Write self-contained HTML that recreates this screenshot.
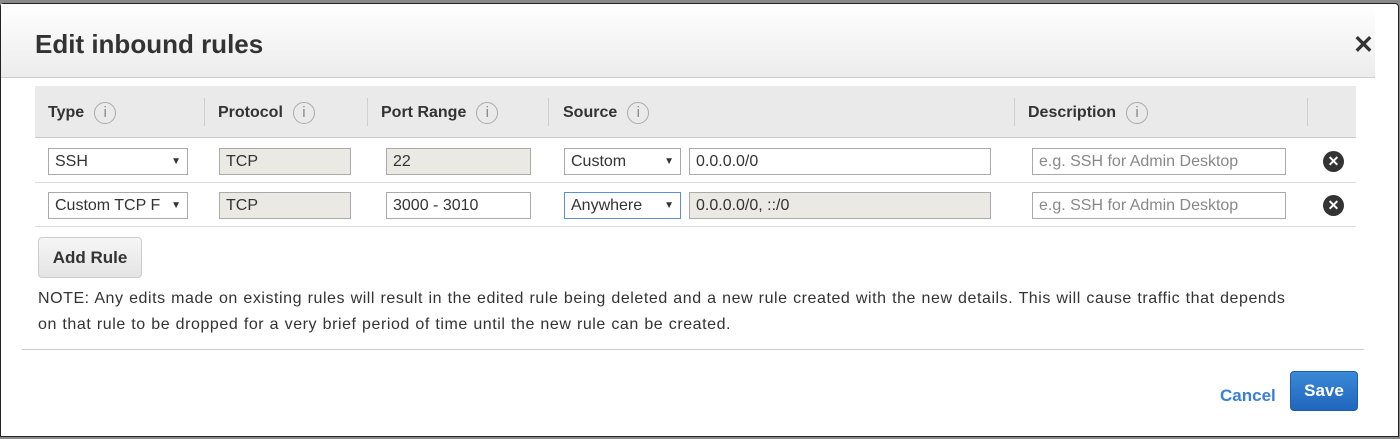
<!DOCTYPE html>
<html><head><style>
*{box-sizing:border-box;margin:0;padding:0}
body{width:1400px;height:439px;background:#8a8a8a;position:relative;overflow:hidden;font-family:"Liberation Sans",Arial,sans-serif;color:#333}
.a{position:absolute}
.dlg{left:0;top:3px;width:1399px;height:434px;background:#fff;border:1px solid #222;border-radius:4px 4px 0 0}
.hdr{left:1px;top:4px;width:1374px;height:74px;background:linear-gradient(#fff,#ececec);border-bottom:1px solid #ccc}
.th{top:86px;left:35px;width:1321px;height:52px;background:#eaeaea;border-bottom:1px solid #ccc}
.sep{top:98px;width:1px;height:28px;background:#d0d0d0}
.hl{font-weight:bold;font-size:16px;top:102px}
.i{display:inline-block;width:22px;height:22px;border:1px solid #aaa;border-radius:50%;font-size:15px;font-weight:normal;color:#888;text-align:center;line-height:20px;margin-left:10px;vertical-align:middle;font-family:"Liberation Sans",sans-serif}
.row{left:35px;width:1321px;height:1px;background:#ddd}
.f{height:27px;border:1px solid #aaa;font-size:16px;padding:3px 6px;line-height:19px;background:#fff;white-space:nowrap;overflow:hidden}
.g{background:#eae9e3}
.ar{position:absolute;right:6px;top:3px;font-size:10px}
.ph{color:#888}
.x{width:21px;height:21px;border-radius:50%;background:#333;color:#fff;font-size:14px;font-weight:bold;text-align:center;line-height:21px}
</style></head><body>
<div class="a dlg"></div>
<div class="a hdr"></div>
<div class="a" style="left:35px;top:29px;font-size:26px;font-weight:bold;color:#333">Edit inbound rules</div>
<div class="a" style="left:1353px;top:30px;font-size:25px;font-weight:bold;color:#333">✕</div>
<div class="a th"></div>
<div class="a sep" style="left:204px"></div>
<div class="a sep" style="left:367px"></div>
<div class="a sep" style="left:548px"></div>
<div class="a sep" style="left:1014px"></div>
<div class="a sep" style="left:1307px"></div>
<div class="a hl" style="left:48px">Type<span class="i">i</span></div>
<div class="a hl" style="left:218px">Protocol<span class="i">i</span></div>
<div class="a hl" style="left:381px">Port Range<span class="i">i</span></div>
<div class="a hl" style="left:563px">Source<span class="i">i</span></div>
<div class="a hl" style="left:1028px">Description<span class="i">i</span></div>
<div class="a row" style="top:182px"></div>
<div class="a row" style="top:226px"></div>

<div class="a f" style="left:48px;top:148px;width:140px">SSH<span class="ar">▼</span></div>
<div class="a f g" style="left:219px;top:148px;width:132px">TCP</div>
<div class="a f g" style="left:386px;top:148px;width:145px">22</div>
<div class="a f" style="left:564px;top:148px;width:117px">Custom<span class="ar">▼</span></div>
<div class="a f" style="left:689px;top:148px;width:302px">0.0.0.0/0</div>
<div class="a f ph" style="left:1032px;top:148px;width:254px">e.g. SSH for Admin Desktop</div>
<div class="a x" style="left:1323px;top:151px">✕</div>

<div class="a f" style="left:48px;top:192px;width:140px">Custom TCP F<span class="ar" style="background:#fff">▼</span></div>
<div class="a f g" style="left:219px;top:192px;width:132px">TCP</div>
<div class="a f" style="left:386px;top:192px;width:145px">3000 - 3010</div>
<div class="a f" style="left:564px;top:192px;width:117px;border-color:#5b8fd9">Anywhere<span class="ar">▼</span></div>
<div class="a f g" style="left:689px;top:192px;width:302px">0.0.0.0/0, ::/0</div>
<div class="a f ph" style="left:1032px;top:192px;width:254px">e.g. SSH for Admin Desktop</div>
<div class="a x" style="left:1323px;top:195px">✕</div>

<div class="a" style="left:38px;top:237px;width:104px;height:41px;border:1px solid #ccc;border-radius:4px;background:linear-gradient(#f6f6f6,#e4e4e4);font-weight:bold;font-size:17px;text-align:center;line-height:39px">Add Rule</div>
<div class="a" style="left:38px;top:286px;font-size:16px;line-height:26px;color:#333;width:1340px;letter-spacing:0.56px;word-spacing:0.5px">NOTE: Any edits made on existing rules will result in the edited rule being deleted and a new rule created with the new details. This will cause traffic that depends<br>on that rule to be dropped for a very brief period of time until the new rule can be created.</div>
<div class="a" style="left:22px;top:349px;width:1342px;height:1px;background:#ccc"></div>
<div class="a" style="left:1220px;top:386px;font-size:17px;font-weight:bold;color:#3a80d0">Cancel</div>
<div class="a" style="left:1290px;top:371px;width:68px;height:40px;border:1px solid #1d5fa8;border-radius:4px;background:linear-gradient(#3b88d8,#1f66bd);color:#fff;font-weight:bold;font-size:17px;text-align:center;line-height:38px">Save</div>
</body></html>
